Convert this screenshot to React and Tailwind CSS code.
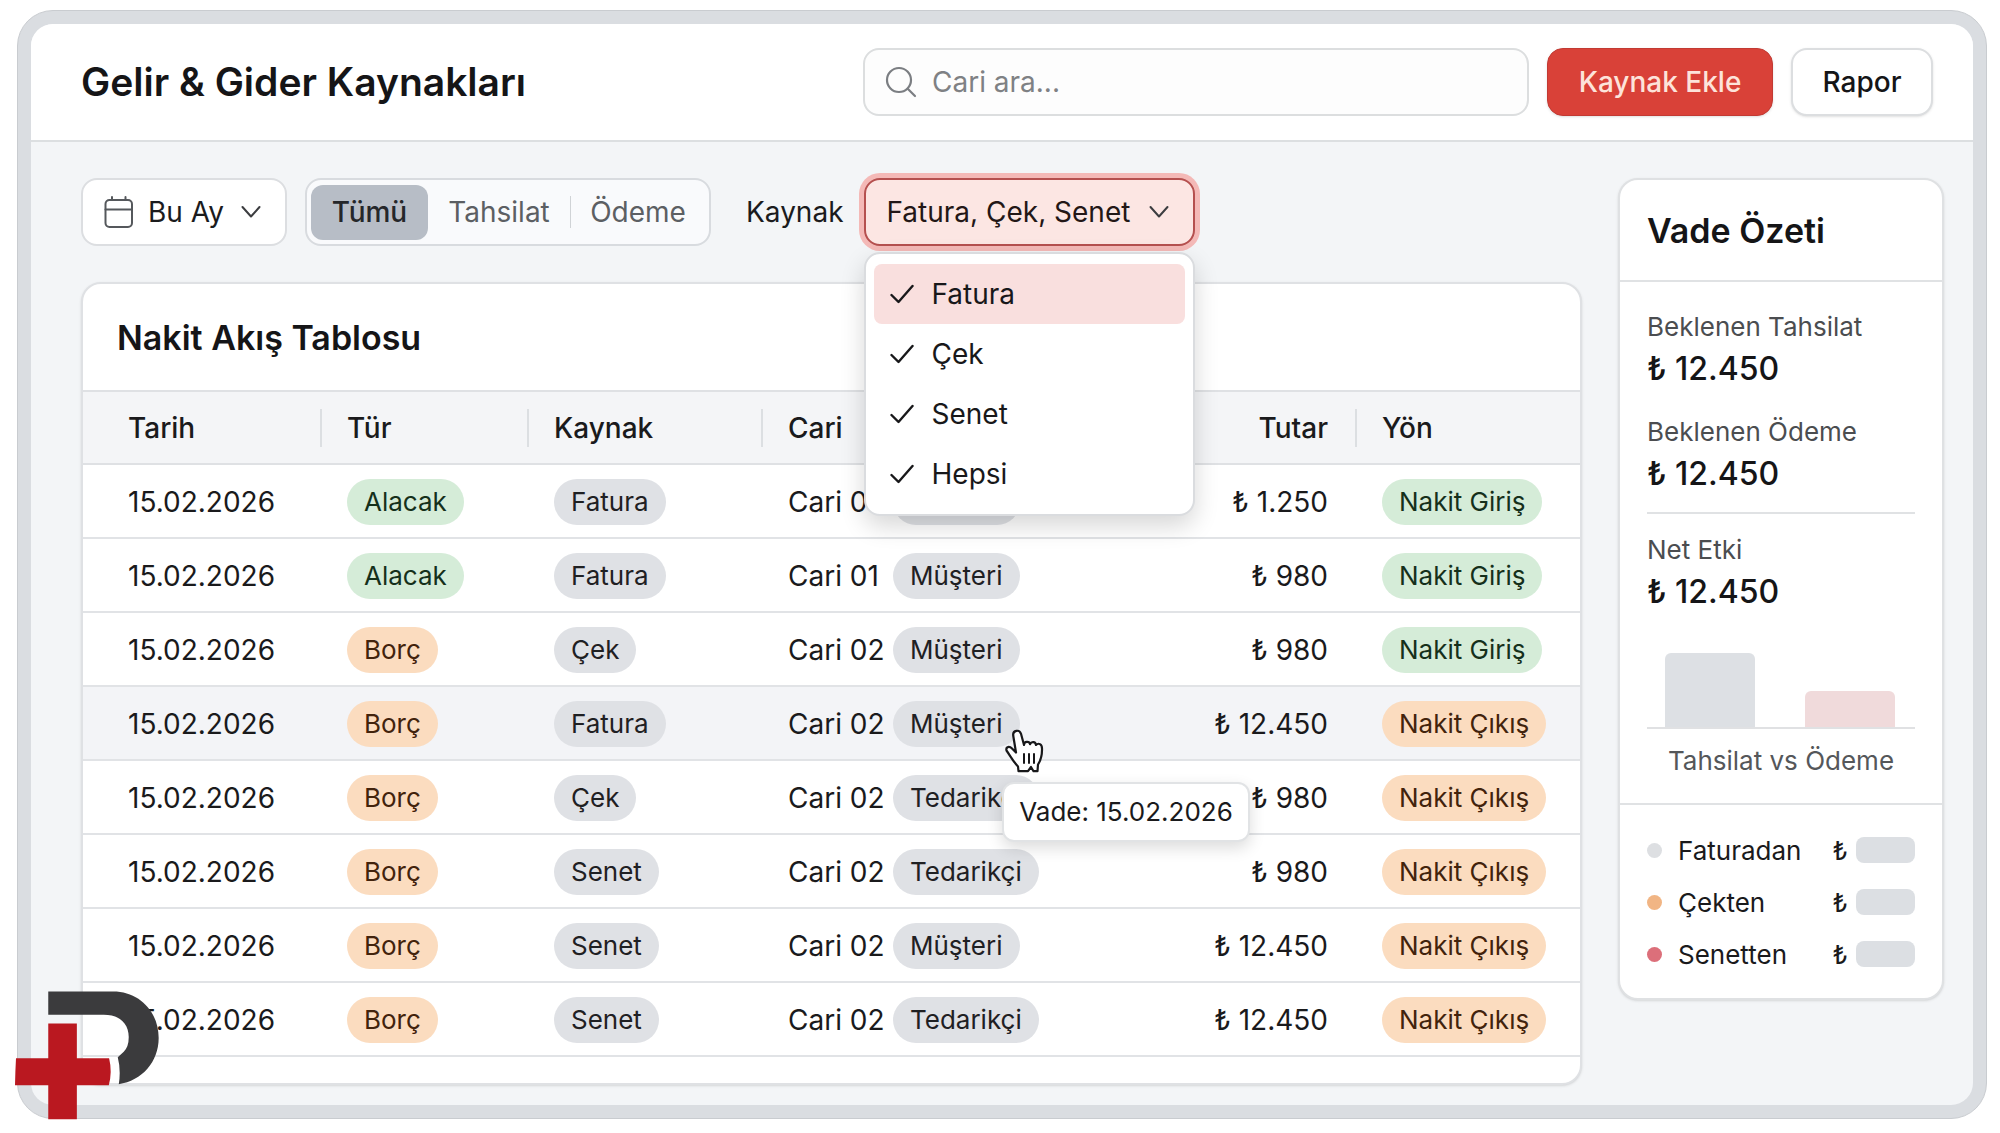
import React from "react";

const rows = [
  { type: "Alacak", source: "Fatura", account: "Cari 01", party: "Müşteri", amount: "₺ 1.250", flow: "Nakit Giriş" },
  { type: "Alacak", source: "Fatura", account: "Cari 01", party: "Müşteri", amount: "₺ 980", flow: "Nakit Giriş" },
  { type: "Borç", source: "Çek", account: "Cari 02", party: "Müşteri", amount: "₺ 980", flow: "Nakit Giriş" },
  { type: "Borç", source: "Fatura", account: "Cari 02", party: "Müşteri", amount: "₺ 12.450", flow: "Nakit Çıkış", hovered: true },
  { type: "Borç", source: "Çek", account: "Cari 02", party: "Tedarikçi", amount: "₺ 980", flow: "Nakit Çıkış" },
  { type: "Borç", source: "Senet", account: "Cari 02", party: "Tedarikçi", amount: "₺ 980", flow: "Nakit Çıkış" },
  { type: "Borç", source: "Senet", account: "Cari 02", party: "Müşteri", amount: "₺ 12.450", flow: "Nakit Çıkış" },
  { type: "Borç", source: "Senet", account: "Cari 02", party: "Tedarikçi", amount: "₺ 12.450", flow: "Nakit Çıkış" },
];

const tones = {
  gray: "bg-[#dfe1e5] text-[#1f2023]",
  green: "bg-[#d5ecd8] text-[#15301b]",
  orange: "bg-[#fbdcbf] text-[#42230c]",
};

function Pill({ tone, children }) {
  return (
    <span className={`inline-flex h-[46px] items-center rounded-full px-[17px] text-[26px] whitespace-nowrap ${tones[tone]}`}>
      {children}
    </span>
  );
}

function Chevron() {
  return (
    <svg viewBox="0 0 20 14" className="h-[14px] w-5 shrink-0" fill="none" stroke="#3c3d40" strokeWidth="2" strokeLinecap="round" strokeLinejoin="round" aria-hidden="true">
      <path d="M1.5 2 10 11.5 18.5 2" />
    </svg>
  );
}

function Check() {
  return (
    <svg viewBox="0 0 24 20" className="h-5 w-6 shrink-0" fill="none" stroke="#18181a" strokeWidth="2.4" strokeLinecap="round" strokeLinejoin="round" aria-hidden="true">
      <path d="M1.5 11 8.5 18 22.5 2" />
    </svg>
  );
}

function CalendarIcon() {
  return (
    <svg viewBox="0 0 30 34" className="pointer-events-none h-[34px] w-[30px] shrink-0" fill="none" stroke="#55585c" strokeWidth="2" strokeLinecap="round" aria-hidden="true">
      <rect x="1.5" y="5" width="26.5" height="27" rx="4" />
      <path d="M1.5 14.5H28M8 2v3M21.5 2v3" />
    </svg>
  );
}

function SearchIcon() {
  return (
    <svg viewBox="0 0 32 32" className="h-8 w-8 shrink-0" fill="none" stroke="#7b7e82" strokeWidth="2.2" strokeLinecap="round" aria-hidden="true">
      <circle cx="14" cy="14" r="12" />
      <path d="m23 23 7 7" />
    </svg>
  );
}

function HandCursor() {
  return (
    <svg viewBox="0 0 40 44" className="absolute top-[28px] left-[111px] z-20 h-11 w-10" fill="#fff" stroke="#18181a" strokeWidth="2.2" strokeLinejoin="round" strokeLinecap="round" aria-hidden="true">
      <path d="M12 23.500 9.200 6.500C8.600 1.200 15.500 0 17 4.800L20 16C20 12 25.500 12 26 15.200 27.500 12.200 31.500 12.500 32 16 34.500 13.500 38 15 38 19.500 38.200 26 37.500 30 34 35.500L33.500 42.200H29.500L27 38 24 42.200H14.500L14 37.500C10 33.500 7 28 2.500 21.500 1.500 17.500 5.500 17 8 19.500L12 23.500" />
      <path d="M20 25v9M25 25v9M30 25v9" strokeWidth="2" />
    </svg>
  );
}

function Logo() {
  return (
    <svg viewBox="45 212 433 387" className="absolute bottom-[13px] left-[15px] z-30 h-[129px] w-36" role="img" aria-label="Logo">
      <path fill="#3b3b3d" d="M145 213H340C420 213 477 275 477 353C477 425 427 481 357 492Q364 450 354 411L372 394Q387 380 387 350C387 310 360 283 312 283H145Z" />
      <path fill="#ba1820" d="M145 309H231V414H328Q338 455 327 495H231V597H145V495H45Q46 450 48 414H145Z" />
    </svg>
  );
}

function Header() {
  return (
    <header className="flex h-[118px] items-center gap-[18px] border-b-2 border-[#dcdfe1] bg-white pr-10 pl-[50px]">
      <h1 className="text-[39px] font-semibold whitespace-nowrap text-[#151517]">Gelir &amp; Gider Kaynakları</h1>
      <label className="ml-auto flex h-[68px] w-[666px] items-center gap-[15px] rounded-2xl border-2 border-[#dcdedf] bg-[#fdfdfd] px-5">
        <SearchIcon />
        <input type="search" aria-label="Cari ara" placeholder="Cari ara..." className="min-w-0 flex-1 bg-transparent text-[28px] outline-none placeholder:text-[#7f8184]" />
      </label>
      <button className="h-[68px] w-[226px] rounded-2xl border border-[#c23a33] bg-[#d94138] text-[28px] font-medium text-[#fde3da] shadow-sm">Kaynak Ekle</button>
      <button className="h-[68px] w-[142px] rounded-2xl border-2 border-[#dcdee0] bg-white text-[28px] font-medium text-[#151517] shadow-sm">Rapor</button>
    </header>
  );
}

function SourceFilter() {
  const options = ["Fatura", "Çek", "Senet", "Hepsi"];
  return (
    <div className="relative">
      <button aria-haspopup="menu" aria-expanded="true" aria-labelledby="source-label" className="flex h-[68px] w-[331px] items-center justify-between rounded-2xl border-2 border-[#b5504f] bg-[#fce6e3] pr-[24px] pl-[21px] text-[28px] whitespace-nowrap text-[#231716] ring-5 ring-[#f4b9b7]">
        Fatura, Çek, Senet
        <Chevron />
      </button>
      <div role="menu" className="absolute top-[74px] left-0 z-30 w-[331px] rounded-2xl border-2 border-[#dadcdf] bg-white px-2 py-[10px] shadow-[0_10px_24px_rgba(0,0,0,0.16)]">
        {options.map((option, i) => (
          <button
            key={option}
            role="menuitemcheckbox"
            aria-checked="true"
            className={`flex h-[60px] w-full items-center gap-[18px] rounded-lg pl-4 text-[28px] text-[#18181a] ${i === 0 ? "bg-[#f9dfde]" : ""}`}
          >
            <Check />
            {option}
          </button>
        ))}
      </div>
    </div>
  );
}

function Filters() {
  return (
    <div className="flex h-[68px] items-center text-[28px] text-[#1b1b1d]">
      <label className="flex h-full w-[206px] items-center gap-[14px] rounded-2xl border-2 border-[#dcdee1] bg-white pr-[24px] pl-[21px]">
        <CalendarIcon />
        <select aria-label="Dönem" className="min-w-0 flex-1 appearance-none bg-transparent outline-none">
          <option>Bu Ay</option>
        </select>
        <Chevron />
      </label>
      <div role="group" aria-label="İşlem türü" className="ml-[18px] flex h-full w-[406px] items-center rounded-2xl border-2 border-[#d8dbdf] bg-[#f9fafc] p-1 text-[#5c5f63]">
        <button className="h-[55px] w-[117px] rounded-xl bg-[#b7bdc6] font-medium text-[#25272a]">Tümü</button>
        <button className="flex-1">Tahsilat</button>
        <span className="h-8 w-px bg-[#d0d3d6]" />
        <button className="w-[134px]">Ödeme</button>
      </div>
      <span id="source-label" className="mr-5 ml-[35px]">Kaynak</span>
      <SourceFilter />
    </div>
  );
}

const headClass = "h-[73px] border-b-2 border-[#dfe1e4] p-0 text-left font-medium";
const cellClass = "h-[74px] border-b-2 border-[#e1e3e6] pt-px pb-0";

function HeadLabel({ children, className = "" }) {
  return <div className={`flex h-[38px] items-center border-l-2 border-[#dcdfe2] ${className}`}>{children}</div>;
}

function CashTable() {
  return (
    <section className="mt-9 rounded-[20px] border-2 border-[#dfe1e4] bg-white pb-[26px] shadow-sm">
      <h2 className="flex h-[108px] items-center border-b-2 border-[#dfe1e4] pl-[34px] text-[34px] font-semibold text-[#151517]">Nakit Akış Tablosu</h2>
      <table className="w-full table-fixed border-separate border-spacing-0 text-[28px] text-[#1a1a1c]">
        <colgroup>
          <col className="w-[237px]" />
          <col className="w-[207px]" />
          <col className="w-[234px]" />
          <col />
          <col className="w-[224px]" />
          <col className="w-[225px]" />
        </colgroup>
        <thead className="bg-[#f4f5f7]">
          <tr>
            <th className={`${headClass} pl-[45px]`}>Tarih</th>
            <th className={headClass}><HeadLabel className="pl-[25px]">Tür</HeadLabel></th>
            <th className={headClass}><HeadLabel className="pl-[25px]">Kaynak</HeadLabel></th>
            <th className={headClass}><HeadLabel className="pl-[25px]">Cari</HeadLabel></th>
            <th className={headClass}><HeadLabel className="justify-end pr-[27px]">Tutar</HeadLabel></th>
            <th className={headClass}><HeadLabel className="pl-[25px]">Yön</HeadLabel></th>
          </tr>
        </thead>
        <tbody>
          {rows.map((row, i) => (
            <tr key={i} className={row.hovered ? "bg-[#f3f4f7]" : ""}>
              <td className={`${cellClass} pl-[45px]`}>15.02.2026</td>
              <td className={`${cellClass} pl-[27px]`}><Pill tone={row.type === "Alacak" ? "green" : "orange"}>{row.type}</Pill></td>
              <td className={`${cellClass} pl-[27px]`}><Pill tone="gray">{row.source}</Pill></td>
              <td className={`${cellClass} pl-[27px]`}>
                <div className="flex items-center">
                  <span className="w-[105px] whitespace-nowrap">{row.account}</span>
                  <div className="relative flex">
                    <Pill tone="gray">{row.party}</Pill>
                    {row.hovered && (
                      <>
                        <HandCursor />
                        <div role="tooltip" className="absolute top-[81px] left-[109px] z-10 flex h-[60px] w-[248px] items-center justify-center rounded-xl border-2 border-[#e1e3e5] bg-white text-[26px] whitespace-nowrap shadow-[0_6px_16px_rgba(0,0,0,0.14)]">
                          Vade: 15.02.2026
                        </div>
                      </>
                    )}
                  </div>
                </div>
              </td>
              <td className={`${cellClass} pr-[27px] text-right`}>{row.amount}</td>
              <td className={`${cellClass} pl-[27px]`}><Pill tone={row.flow === "Nakit Giriş" ? "green" : "orange"}>{row.flow}</Pill></td>
            </tr>
          ))}
        </tbody>
      </table>
    </section>
  );
}

function Stat({ label }) {
  return (
    <div>
      <dt className="text-[26px] leading-10 text-[#4b4d50]">{label}</dt>
      <dd className="text-[32px] leading-[44px] font-medium text-[#151517]">₺ 12.450</dd>
    </div>
  );
}

function Summary() {
  const legend = [
    { label: "Faturadan", dot: "bg-[#dddfe2]" },
    { label: "Çekten", dot: "bg-[#f1b584]" },
    { label: "Senetten", dot: "bg-[#dc6f7a]" },
  ];
  return (
    <aside className="w-[326px] shrink-0 self-start rounded-[20px] border-2 border-[#dfe1e3] bg-white shadow-sm">
      <h2 className="flex h-[102px] items-center border-b-2 border-[#e0e2e4] px-[27px] text-[34px] font-semibold text-[#151517]">Vade Özeti</h2>
      <div className="px-[27px] pt-[25px] pb-[22px]">
        <dl className="flex flex-col gap-[21px] border-b-2 border-[#e0e2e4] pb-4">
          <Stat label="Beklenen Tahsilat" />
          <Stat label="Beklenen Ödeme" />
        </dl>
        <dl className="pt-4">
          <Stat label="Net Etki" />
        </dl>
        <div className="mt-[39px] flex h-[76px] items-end justify-between border-b-2 border-[#e0e1e3] pr-5 pl-[18px]">
          <div className="h-[74px] w-[90px] rounded-t-md bg-[#dde0e4]" />
          <div className="h-9 w-[90px] rounded-t-md bg-[#f0dadb]" />
        </div>
        <p className="pt-3 text-center text-[26px] leading-10 text-[#55575a]">Tahsilat vs Ödeme</p>
      </div>
      <ul className="border-t-2 border-[#e0e2e4] px-[27px] pt-[19px] pb-[18px] text-[26px] text-[#1a1a1c]">
        {legend.map((item) => (
          <li key={item.label} className="flex h-[52px] items-center">
            <span className={`mr-[16px] size-[15px] rounded-full ${item.dot}`} />
            <span className="flex-1">{item.label}</span>
            <span>₺</span>
            <span className="ml-2 h-[26px] w-[59px] rounded-lg bg-[#dcdfe3]" />
          </li>
        ))}
      </ul>
    </aside>
  );
}

export default function App() {
  return (
    <div className="relative flex min-h-screen bg-white pt-[10px] pr-[13px] pb-[14px] pl-[17px] font-['Inter',sans-serif]">
      <div className="flex flex-1 rounded-[36px] border border-[#c9ccd0] bg-[#dadde1] p-[13px]">
        <main className="min-w-0 flex-1 overflow-hidden rounded-[22px] bg-[#f3f5f7]">
          <Header />
          <div className="flex gap-9 pt-9 pr-[29px] pb-5 pl-[50px]">
            <div className="min-w-0 flex-1">
              <Filters />
              <CashTable />
            </div>
            <Summary />
          </div>
        </main>
      </div>
      <Logo />
    </div>
  );
}
